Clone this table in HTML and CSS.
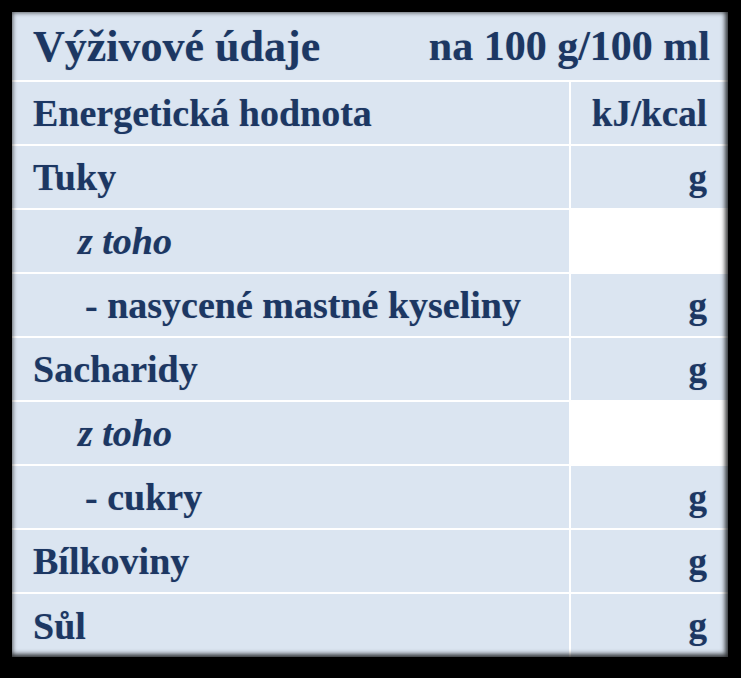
FILE: index.html
```html
<!DOCTYPE html>
<html lang="cs">
<head>
<meta charset="utf-8">
<link rel="stylesheet" href="styles.css">
</head>
<body>
<div class="frame">
  <div class="nutri">
    <div class="cell head"><span class="title">Výživové údaje</span><span class="per">na 100 g/100 ml</span></div>
    <div class="cell name">Energetická hodnota</div><div class="cell unit">kJ/kcal</div>
    <div class="cell name">Tuky</div><div class="cell unit">g</div>
    <div class="cell name sub"><em>z toho</em></div><div class="cell unit blank"></div>
    <div class="cell name subsub">- nasycené mastné kyseliny</div><div class="cell unit">g</div>
    <div class="cell name">Sacharidy</div><div class="cell unit">g</div>
    <div class="cell name sub"><em>z toho</em></div><div class="cell unit blank"></div>
    <div class="cell name subsub">- cukry</div><div class="cell unit">g</div>
    <div class="cell name">Bílkoviny</div><div class="cell unit">g</div>
    <div class="cell name">Sůl</div><div class="cell unit">g</div>
  </div>
</div>
</body>
</html>
```
FILE: styles.css
```css
html, body {
  margin: 0;
  padding: 0;
  background: #000;
}
body {
  width: 741px;
  height: 678px;
  overflow: hidden;
}
.frame {
  padding: 12px 13px 0 12px;
}
.nutri {
  position: relative;
  width: 716px;
  display: grid;
  grid-template-columns: 557px 157px;
  grid-template-rows: 68px repeat(8, 62px) 63px;
  gap: 2px;
  background: #ffffff;
  font-family: "Liberation Serif", serif;
  font-weight: bold;
  color: #1c3763;
  text-shadow: 0 0 1px rgba(28,55,99,0.35);
}
.nutri::after {
  content: "";
  position: absolute;
  inset: 0;
  pointer-events: none;
  box-shadow: inset 0 0 4px 1px rgba(0,0,0,0.55), inset -3px -3px 5px rgba(0,0,0,0.6);
}
.cell {
  background: #dbe5f1;
  display: flex;
  align-items: center;
  font-size: 37px;
  white-space: nowrap;
}
.name { font-size: 38px; padding-left: 21px; }
.head {
  grid-column: 1 / -1;
  justify-content: space-between;
  padding: 0 18px 0 21px;
}
.title { font-size: 44px; }
.per { font-size: 42px; }
.unit {
  justify-content: flex-end;
  padding-right: 21px;
}
.blank { background: #ffffff; }
.sub { padding-left: 66px; }
.sub em { font-style: italic; }
.subsub { padding-left: 73px; }
```
